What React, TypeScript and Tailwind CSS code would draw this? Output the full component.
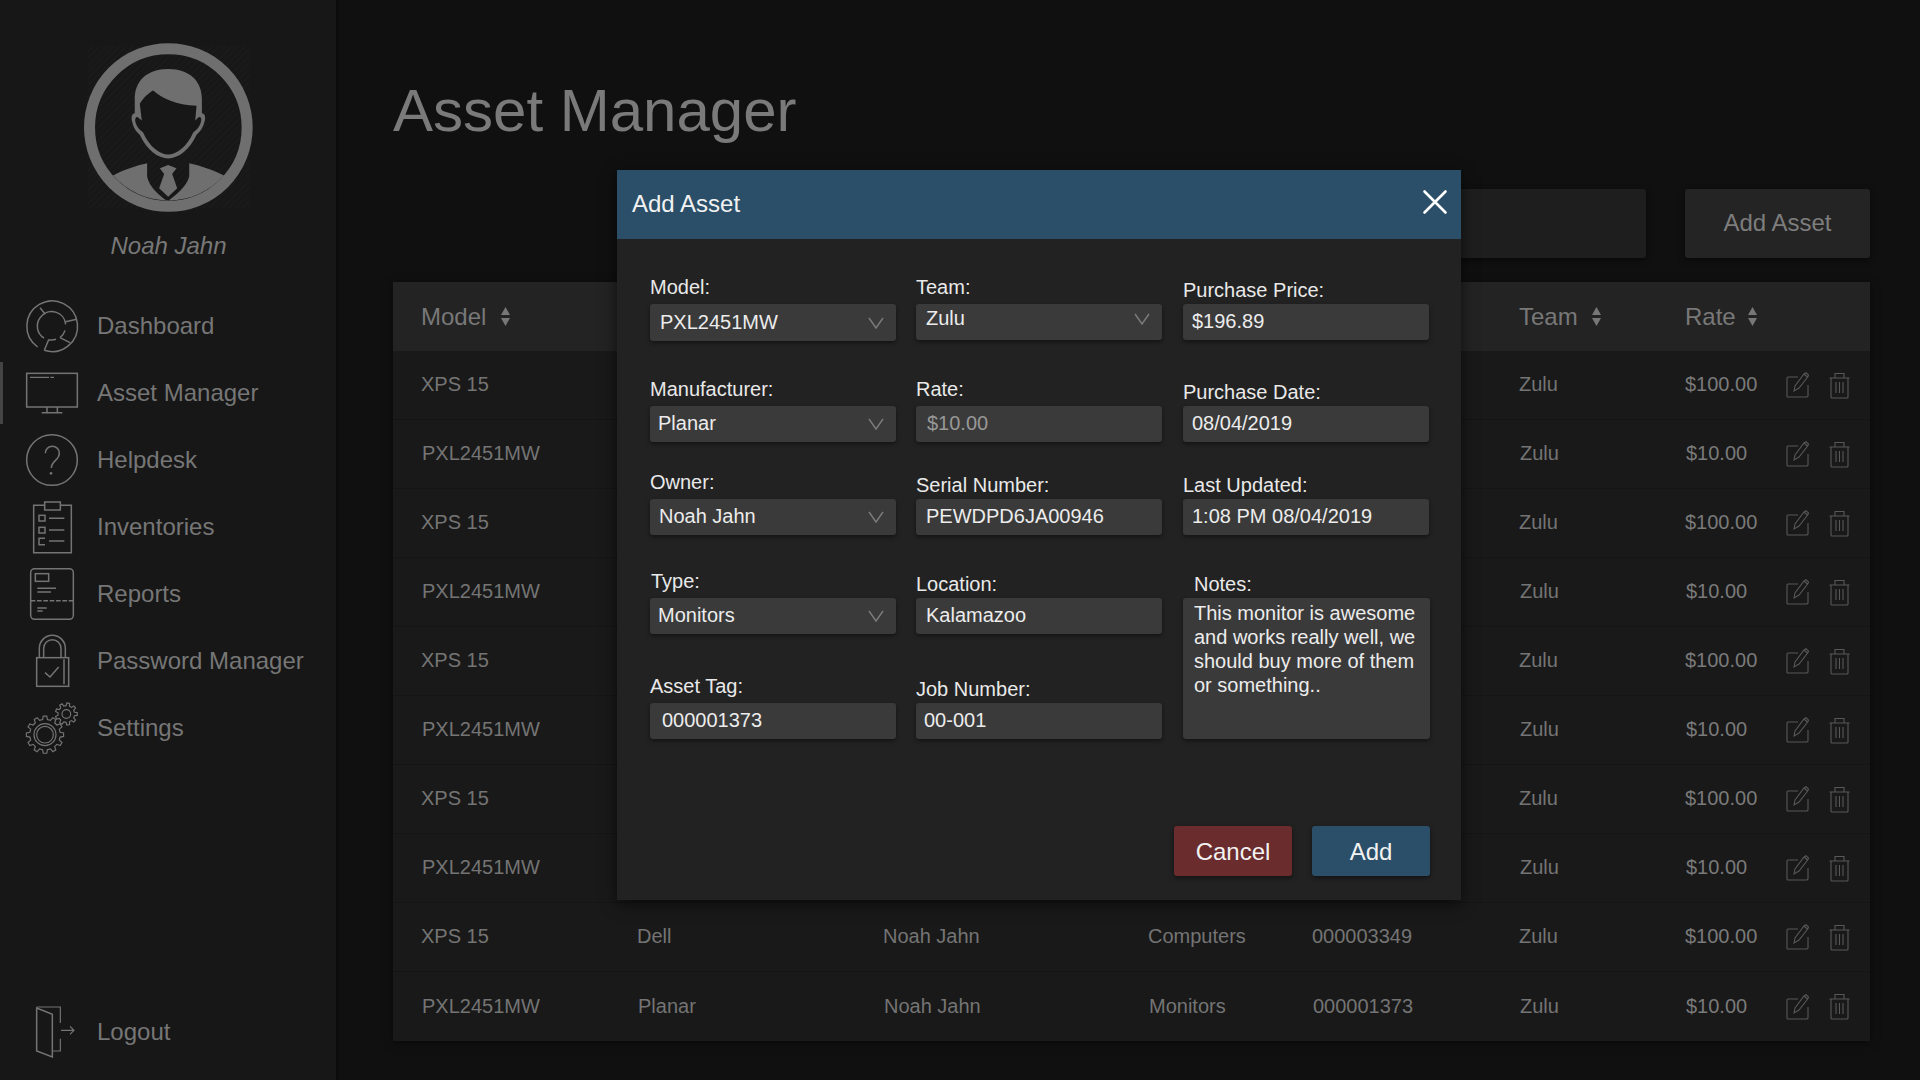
import type { ReactNode } from "react";

const gearPath = (cx: number, cy: number, outer: number, inner: number, teeth: number) => {
  const step = (Math.PI * 2) / teeth;
  const pts: string[] = [];
  for (let i = 0; i < teeth; i++) {
    const a = i * step;
    const at = (r: number, t: number) =>
      `${(cx + r * Math.cos(a + t * step)).toFixed(1)} ${(cy + r * Math.sin(a + t * step)).toFixed(1)}`;
    pts.push(at(inner, -0.3), at(outer, -0.18), at(outer, 0.18), at(inner, 0.3));
  }
  return `M${pts.join("L")}Z`;
};

function NavIcon({ cy, children }: { cy: number; children: ReactNode }) {
  return (
    <svg
      width="52"
      height="52"
      viewBox={`78 ${cy - 78} 156 156`}
      fill="none"
      stroke="#747474"
      strokeWidth="4.5"
      className="shrink-0 overflow-visible"
    >
      {children}
    </svg>
  );
}

const navItems: { label: string; active?: boolean; icon: ReactNode }[] = [
  {
    label: "Dashboard",
    icon: (
      <NavIcon cy={105}>
        <path d="M113 168A76 76 0 1 1 133 178" />
        <path d="M122 78A42 42 0 0 1 197 100" />
        <path d="M195 118A42 42 0 0 1 180 140" />
        <path d="M168 145A42 42 0 0 1 145 146" />
        <path d="M132 141A42 42 0 0 1 122 78" />
        <path d="M120 50L136 70M197 92L230 85M180 140L210 155M146 146L133 178" />
      </NavIcon>
    ),
  },
  {
    label: "Asset Manager",
    active: true,
    icon: (
      <NavIcon cy={307}>
        <rect x="80" y="248" width="152" height="101" />
        <path d="M141 349V366M172 349V366M125 366H187" />
        <path d="M90 260H147M151 260H162" strokeWidth="3.5" />
      </NavIcon>
    ),
  },
  {
    label: "Helpdesk",
    icon: (
      <NavIcon cy={510}>
        <circle cx="156" cy="510" r="76" />
        <path d="M136 490C136 462 178 462 178 490C178 512 155 510 154 534" />
        <circle cx="153" cy="550" r="4" fill="#747474" stroke="none" />
      </NavIcon>
    ),
  },
  {
    label: "Inventories",
    icon: (
      <NavIcon cy={710}>
        <path d="M134 645H101V787H214V645H181" />
        <rect x="134" y="635" width="47" height="24" />
        <rect x="117" y="675" width="18" height="17" />
        <rect x="117" y="711" width="18" height="17" />
        <path d="M135 744H117V763H135M147 684H193M147 719H193M147 752H193" />
      </NavIcon>
    ),
  },
  {
    label: "Reports",
    icon: (
      <NavIcon cy={102}>
        <rect x="92" y="26" width="128" height="152" rx="12" />
        <rect x="106" y="41" width="40" height="23" />
        <path d="M112 85H168M112 96H153M112 144H140M112 153H128" />
        <path d="M92 122H220" strokeDasharray="14 5" />
      </NavIcon>
    ),
  },
  {
    label: "Password Manager",
    icon: (
      <NavIcon cy={300}>
        <rect x="110" y="290" width="96" height="86" />
        <path d="M118 290V262A39 39 0 0 1 196 262V290M131 290V262A26 26 0 0 1 183 262V290M192 295V370" />
        <path d="M135 335L150 348L176 318" />
      </NavIcon>
    ),
  },
  {
    label: "Settings",
    icon: (
      <NavIcon cy={500}>
        <path d={gearPath(135, 520, 56, 46, 12)} strokeWidth="3.5" />
        <circle cx="135" cy="520" r="33" strokeWidth="3.5" />
        <circle cx="135" cy="520" r="25" strokeWidth="3.5" />
        <path d={gearPath(199, 458, 33, 25, 9)} strokeWidth="3.5" />
        <circle cx="199" cy="458" r="13" strokeWidth="3.5" />
      </NavIcon>
    ),
  },
];

function Chevron() {
  return (
    <svg width="16" height="12" viewBox="0 0 16 12" fill="none" stroke="#7a7a7a" strokeWidth="1.5" className="shrink-0">
      <path d="M1 1L8 11L15 1" />
    </svg>
  );
}

function SortArrows() {
  return (
    <svg width="9" height="19" viewBox="0 0 9 19" fill="#777777" className="shrink-0">
      <path d="M4.5 0L9 8H0Z" />
      <path d="M4.5 19L9 11H0Z" />
    </svg>
  );
}

function EditIcon() {
  return (
    <svg width="23" height="26" viewBox="0 0 23 26" fill="none" stroke="#585858" strokeWidth="1.1">
      <path d="M12 5H2Q1 5 1 6V24Q1 25 2 25H20Q22 25 22 24V13" />
      <path d="M8 19L9 14L18 2L20 0.8L22.5 3L22 4.5L13 16L8 19ZM18 2L21.5 5" />
    </svg>
  );
}

function TrashIcon() {
  return (
    <svg width="21" height="27" viewBox="0 0 21 27" fill="none" stroke="#585858" strokeWidth="1.1">
      <path d="M0.5 6H20.5M2 6V25Q2 26 3 26H18Q19 26 19 25V6M6 6V1.5H15V6" />
      <path d="M7 10V21M10.5 10V21M14 10V21" />
    </svg>
  );
}

function Field({
  label,
  value,
  select,
  raised,
  boxClass = "",
  labelClass = "",
}: {
  label: string;
  value: string;
  select?: boolean;
  raised?: boolean;
  boxClass?: string;
  labelClass?: string;
}) {
  return (
    <div className="flex w-[246px] flex-col justify-end">
      <div className={`text-[20px] leading-6 text-[#e9e9e9] ${raised ? "mb-[5px]" : "mb-[2px]"} ${labelClass}`}>{label}</div>
      <div
        className={`flex h-9 items-center justify-between rounded-[3px] bg-[#3a3a3a] pr-3 text-[20px] text-[#ececec] shadow-[0_2px_4px_rgba(0,0,0,0.45)] ${boxClass}`}
      >
        <span className="pb-[2px]">{value}</span>
        {select && <Chevron />}
      </div>
    </div>
  );
}

// the first eight rows only show what the modal leaves uncovered
const assetRows = Array.from({ length: 10 }, (_, i) => {
  const covered = i < 8;
  return i % 2 === 0
    ? ["XPS 15", covered ? "" : "Dell", covered ? "" : "Noah Jahn", covered ? "" : "Computers", covered ? "" : "000003349", "Zulu", "$100.00"]
    : ["PXL2451MW", covered ? "" : "Planar", covered ? "" : "Noah Jahn", covered ? "" : "Monitors", covered ? "" : "000001373", "Zulu", "$10.00"];
});

const columnGrid = "grid grid-cols-[216px_246px_265px_164px_207px_166px_101px_1fr] items-center";

export default function App() {
  return (
    <div className="relative flex h-[1080px] w-full overflow-hidden bg-[#101010] font-['Liberation_Sans',Arial,sans-serif] antialiased">
      <aside className="flex w-[336px] shrink-0 flex-col bg-[#171717] pb-[15px] pt-[43px] shadow-[1px_0_3px_rgba(0,0,0,0.5)]">
        <div className="flex justify-center pl-px">
          <svg width="169" height="169" viewBox="253 130 506 506">
            <defs>
              <pattern id="hatch" width="14" height="14" patternUnits="userSpaceOnUse" patternTransform="rotate(45)">
                <rect width="7" height="14" fill="#1a1a1a" />
              </pattern>
            </defs>
            <rect x="263" y="140" width="486" height="486" fill="url(#hatch)" />
            <circle cx="505.5" cy="383" r="236" fill="none" stroke="#6f6f6f" strokeWidth="33" />
            <path
              fill="#6f6f6f"
              d="M505 208C570 208 607 245 606 300L606 340C615 340 618 352 614 365C609 385 600 395 590 405C570 450 535 476 505 476C475 476 440 450 420 405C410 395 401 385 397 365C393 352 397 340 405 340L405 300C404 245 440 208 505 208Z"
            />
            <path
              fill="#171717"
              d="M460 272C485 295 530 316 590 318L586 362L596 352C604 350 606 358 602 370C598 382 590 390 580 398C562 440 530 464 505 464C480 464 448 440 430 398C420 390 412 382 408 370C404 358 408 350 414 352L426 362L420 312C430 295 445 280 460 272Z"
            />
            <path
              fill="#6f6f6f"
              d="M340 527C370 510 410 497 442 490L442 530C448 560 475 585 503 604C530 585 560 560 568 530L568 490C600 497 640 510 672 527A222 222 0 0 1 340 527Z"
            />
            <path fill="#6f6f6f" d="M480 505L505 495L530 505L517 522L532 565L505 590L478 565L493 522Z" />
          </svg>
        </div>
        <div className="mt-[20px] pl-px text-center text-[24px] italic leading-7 text-[#787878]">Noah Jahn</div>
        <nav className="mt-[32px] flex flex-col">
          {navItems.map((item) => (
            <div key={item.label} className="flex h-[67px] items-center">
              <span className={`mr-[23px] h-[62px] w-[3px] ${item.active ? "bg-[#444444]" : ""}`} />
              {item.icon}
              <span className="ml-[19px] text-[24px] text-[#767676]">{item.label}</span>
            </div>
          ))}
        </nav>
        <div className="mt-auto flex h-[67px] items-center pl-[26px]">
          <NavIcon cy={1415}>
            <path d="M110 1343L157 1362V1490L110 1472Z" />
            <path d="M110 1340H181V1388M181 1435V1472H157M183 1410H222M210 1398L222 1410L210 1422" strokeWidth="3.5" />
          </NavIcon>
          <span className="ml-[19px] text-[24px] text-[#767676]">Logout</span>
        </div>
      </aside>

      <main className="min-w-0 flex-1 pl-[57px] pr-[50px]">
        <h1 className="mt-[81px] text-[60px] leading-[60px] text-[#7a7a7a]">Asset Manager</h1>
        <div className="mt-[48px] flex h-[69px] justify-end gap-[39px]">
          <div className="w-[700px] rounded-[3px] bg-[#1e1e1e] shadow-[0_2px_6px_rgba(0,0,0,0.5)]" />
          <div className="flex w-[185px] items-center justify-center rounded-[3px] bg-[#242424] pb-[2px] text-[24px] text-[#7d7d7d] shadow-[0_2px_6px_rgba(0,0,0,0.5)]">
            Add Asset
          </div>
        </div>
        <div className="mt-[24px] shadow-[0_2px_8px_rgba(0,0,0,0.5)]">
          <div className={`${columnGrid} h-[69px] bg-[#232323] pl-[28px] text-[24px] text-[#787878]`}>
            {["Model", "", "", "", "", "Team", "Rate"].map((title, i) => (
              <div key={i} className={`flex items-center ${i === 0 ? "gap-[15px]" : i === 6 ? "gap-[12px]" : "gap-[14px]"}`}>
                {title}
                {title && <SortArrows />}
              </div>
            ))}
          </div>
          {assetRows.map((row, i) => (
            <div
              key={i}
              className={`${columnGrid} h-[69px] border-b border-[#151515] bg-[#191919] pb-[2px] text-[20px] text-[#747474] last:border-b-0 ${
                i % 2 === 0 ? "pl-[28px]" : "pl-[29px]"
              }`}
            >
              {row.map((cell, j) => (
                <div key={j} className={j === 6 ? "text-[#7a7a7a]" : ""}>
                  {cell}
                </div>
              ))}
              <div className={`mt-[2px] flex items-center gap-[20px] ${i % 2 === 0 ? "" : "-ml-px"}`}>
                <EditIcon />
                <TrashIcon />
              </div>
            </div>
          ))}
        </div>
      </main>

      <section className="absolute left-[617px] top-[170px] h-[730px] w-[844px] bg-[#222222] shadow-[0_4px_14px_rgba(0,0,0,0.6)]">
        <header className="flex h-[69px] items-center justify-between bg-[#2b4f68] pl-[15px] pr-[13px]">
          <span className="pb-px text-[24px] text-[#f2f2f2]">Add Asset</span>
          <svg width="26" height="26" viewBox="0 0 26 26" fill="none" stroke="#ffffff" strokeWidth="2.6" strokeLinecap="round" className="mb-[6px]">
            <path d="M2.5 2.5L23.5 23.5M23.5 2.5L2.5 23.5" />
          </svg>
        </header>
        <div className="pl-[33px] pr-[30px]">
          <div className="grid grid-cols-[266px_267px_247px] grid-rows-[102px_101px_93px_99px_105px]">
            <Field label="Model:" value="PXL2451MW" select raised boxClass="h-[37px] pl-[10px]" />
            <Field label="Team:" value="Zulu" select raised boxClass="mb-px pb-[6px] pl-[10px]" />
            <Field label="Purchase Price:" value="$196.89" boxClass="mb-px pl-[9px]" />

            <Field label="Manufacturer:" value="Planar" select raised boxClass="pl-[8px]" />
            <Field label="Rate:" value="$10.00" raised boxClass="pl-[11px] !text-[#989898]" />
            <Field label="Purchase Date:" value="08/04/2019" boxClass="pl-[9px]" />

            <Field label="Owner:" value="Noah Jahn" select raised boxClass="pl-[9px]" />
            <Field label="Serial Number:" value="PEWDPD6JA00946" boxClass="pl-[10px]" />
            <Field label="Last Updated:" value="1:08 PM 08/04/2019" boxClass="pl-[9px]" />

            <Field label="Type:" value="Monitors" select raised boxClass="pl-[8px]" labelClass="pl-px" />
            <Field label="Location:" value="Kalamazoo" boxClass="pl-[10px]" />
            <div className="row-span-2 flex w-[247px] flex-col justify-end">
              <div className="mb-[2px] pl-[11px] text-[20px] leading-6 text-[#e9e9e9]">Notes:</div>
              <div className="h-[141px] rounded-[3px] bg-[#3a3a3a] pl-[11px] pr-2 pt-[3px] text-[20px] leading-6 text-[#ececec] shadow-[0_2px_4px_rgba(0,0,0,0.45)]">
                This monitor is awesome and works really well, we should buy more of them or something..
              </div>
            </div>

            <Field label="Asset Tag:" value="000001373" raised boxClass="pl-[12px]" />
            <Field label="Job Number:" value="00-001" boxClass="pl-[8px]" />
          </div>
          <div className="mt-[87px] flex justify-end gap-[20px] pr-px">
            <button className="h-[50px] w-[118px] rounded-[3px] bg-[#6a2c2c] pt-px text-[24px] text-[#f2f2f2] shadow-[0_2px_5px_rgba(0,0,0,0.5)]">
              Cancel
            </button>
            <button className="h-[50px] w-[118px] rounded-[3px] bg-[#2b4f68] pt-px text-[24px] text-[#f2f2f2] shadow-[0_2px_5px_rgba(0,0,0,0.5)]">
              Add
            </button>
          </div>
        </div>
      </section>
    </div>
  );
}
